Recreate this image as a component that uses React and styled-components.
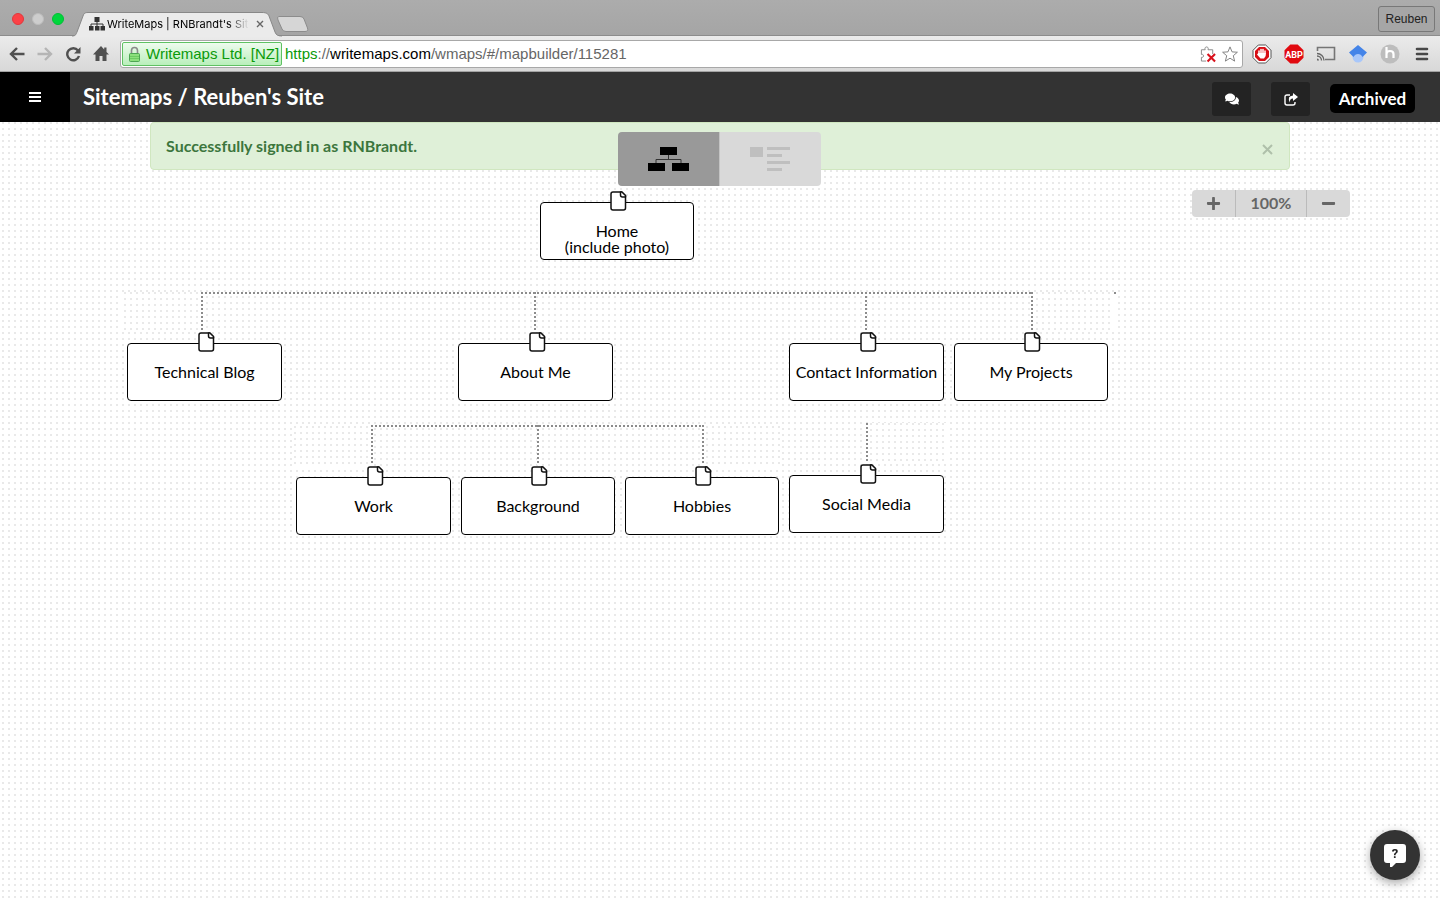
import React from 'react';
import styled, { createGlobalStyle } from 'styled-components';
import { FaPlus, FaMinus, FaComments } from 'react-icons/fa';

const Global = createGlobalStyle`
  * { box-sizing: border-box; }
  body { margin: 0; font-family: Lato, "Liberation Sans", sans-serif; color: #000; background: #fff; }
  button, input { font: inherit; color: inherit; margin: 0; padding: 0; border: 0; background: none; }
`;

const Page = styled.div`
  min-height: 100vh;
  display: flex;
  flex-direction: column;
`;

/* Browser window */
const TabStrip = styled.div`
  height: 36px;
  display: flex;
  align-items: flex-end;
  background: linear-gradient(#acacac, #a5a5a5);
  border-bottom: 1px solid #8c8c8c;
`;
const Lights = styled.div`
  display: flex;
  gap: 8px;
  padding: 0 8px 10px 12px;
`;
const Light = styled.span`
  width: 12px;
  height: 12px;
  border-radius: 50%;
  background: ${p => p.$color};
  border: 1px solid ${p => p.$edge};
`;
const Tab = styled.div`
  position: relative;
  width: 210px;
  height: 24px;
  margin: 0 -6px -1px 0;
  display: flex;
  align-items: center;
  padding: 0 18px 0 17px;
  font: 11px/16px Inter, sans-serif;
`;
const TabShape = styled.svg`
  position: absolute;
  inset: 0;
`;
const TabIcon = styled.svg`
  position: relative;
  flex: none;
  margin-right: 2px;
`;
const TabTitle = styled.span`
  position: relative;
  flex: 1;
  overflow: hidden;
  white-space: nowrap;
  -webkit-mask-image: linear-gradient(90deg, #000 85%, transparent);
  mask-image: linear-gradient(90deg, #000 85%, transparent);
`;
const TabClose = styled.button`
  position: relative;
  width: 8px;
  height: 16px;
  margin-left: 7px;
  display: flex;
  align-items: center;
`;
const NewTab = styled.button`
  width: 34px;
  height: 20px;
  display: flex;
  margin-bottom: 2px;
`;
const Profile = styled.button`
  && {
    height: 26px;
    width: 57px;
    margin: 0 5px 3px auto;
    border: 1px solid #787878;
    border-radius: 3px;
    font: 12px/16px "Liberation Sans", sans-serif;
    color: #222;
    background: #a6a6a6;
  }
`;
const Toolbar = styled.div`
  height: 36px;
  display: flex;
  align-items: center;
  gap: 9px;
  padding: 0 8px 0 9px;
  background: linear-gradient(#ebebeb, #d8d8d8);
  border-bottom: 1px solid #a3a3a3;
`;
const ToolButton = styled.button`
  width: 16px;
  height: 20px;
  flex: none;
  display: flex;
  align-items: center;
  justify-content: center;
`;
const Address = styled.div`
  flex: 1;
  height: 28px;
  display: flex;
  align-items: center;
  border: 1px solid #a8a8a8;
  border-radius: 3px;
  background: #fff;
  padding: 0 4px 0 1px;
  font: 15px/20px "Liberation Sans", sans-serif;
`;
const Nav = styled.div`
  display: flex;
  gap: 12px;
  padding-right: 2px;
`;
const Cert = styled.span`
  height: 24px;
  width: 160px;
  flex: none;
  display: flex;
  align-items: center;
  gap: 5px;
  padding: 0 1px 0 5px;
  border: 1px solid #5fc163;
  border-radius: 2px;
  background: linear-gradient(#eefbee, #b9efbb);
  color: #0a9a0a;
  white-space: nowrap;
`;
const Url = styled.span`
  flex: 1;
  padding-left: 3px;
  color: #666;
  white-space: nowrap;
`;
const Scheme = styled.span` color: #0a9a0a; `;
const Host = styled.span` color: #000; `;
const AddressIcons = styled.div`
  display: flex;
  gap: 6px;
`;
const Extensions = styled.div`
  display: flex;
  gap: 12px;
  & > button { width: 20px; }
`;

/* Application header */
const Header = styled.header`
  height: 50px;
  display: flex;
  align-items: center;
  background: #333;
`;
const MenuButton = styled.button`
  && {
    width: 70px;
    height: 50px;
    background: #000;
    display: flex;
    align-items: center;
    justify-content: center;
  }
`;
const Title = styled.h1`
  margin: 0;
  padding: 0 0 0 13px;
  flex: 1;
  font-size: 22px;
  line-height: 32px;
  font-weight: 700;
  color: #fff;
`;
const Actions = styled.div`
  display: flex;
  align-items: center;
  gap: 20px;
  padding: 4px 25px 0 0;
`;
const ActionButton = styled.button`
  && {
    width: 39px;
    height: 34px;
    border-radius: 3px;
    background: #232323;
    color: #fff;
    display: flex;
    align-items: center;
    justify-content: center;
  }
`;
const Archived = styled.span`
  height: 29px;
  width: 85px;
  margin-bottom: 2px;
  border-radius: 5px;
  background: #000;
  color: #fff;
  font-size: 17px;
  line-height: 29px;
  font-weight: 700;
  text-align: center;
`;

/* Workspace */
const Workspace = styled.main`
  position: relative;
  flex: 1;
  background: url("data:image/svg+xml,%3Csvg xmlns='http://www.w3.org/2000/svg' width='6' height='6'%3E%3Crect x='2' width='2' height='2' fill='%23e9e9e9'/%3E%3C/svg%3E") #fff;
`;
const Alert = styled.div`
  margin: 0 150px;
  height: 48px;
  display: flex;
  justify-content: space-between;
  align-items: center;
  padding: 0 16px 0 15px;
  border: 1px solid #d0e7c0;
  border-radius: 4px;
  background: #dff0d8;
  color: #3c763d;
  font-size: 16px;
  line-height: 20px;
  font-weight: 700;
`;
const AlertClose = styled.button`
  height: 12px;
  margin-top: 8px;
  display: flex;
`;
const ViewToggle = styled.div`
  position: absolute;
  top: 10px;
  left: 50%;
  margin-left: -102px;
  display: flex;
  border-radius: 4px;
  overflow: hidden;
`;
const ViewButton = styled.button`
  && {
    width: ${p => (p.$active ? 101 : 102)}px;
    height: 54px;
    background: ${p => (p.$active ? '#999' : '#d9d9d9')};
    border-left: ${p => (p.$active ? 0 : 1)}px solid #c4c4c4;
    display: flex;
    align-items: center;
    justify-content: center;
  }
`;
const Zoom = styled.div`
  position: absolute;
  top: 68px;
  right: 90px;
  display: flex;
  border-radius: 4px;
  overflow: hidden;
  background: #d9d9d9;
  color: #666;
`;
const ZoomButton = styled.button`
  width: 43px;
  height: 27px;
  display: flex;
  align-items: center;
  justify-content: center;
`;
const ZoomValue = styled.span`
  width: 72px;
  border: solid #bbb;
  border-width: 0 1px;
  font-size: 16px;
  line-height: 26px;
  font-weight: 700;
  text-align: center;
`;

/* Free diagram canvas: coordinates are the content */
const Map = styled.div`
  position: absolute;
  top: 0;
  left: 50%;
  margin-left: -720px;
  width: 0;
  height: 0;
`;
const Node = styled.div`
  position: absolute;
  left: ${p => p.$x}px;
  top: ${p => p.$y}px;
  width: ${p => p.$w || 155}px;
  height: 58px;
  padding: 3px 0 4px;
  border: 1px solid #000;
  border-radius: 4px;
  background: #fff;
  display: flex;
  align-items: ${p => (p.$root ? 'flex-end' : 'center')};
  justify-content: center;
  text-align: center;
  white-space: pre;
  font-size: 16px;
  line-height: 16px;
  font-variant-ligatures: none;
`;
const PageIcon = styled.svg`
  position: absolute;
  top: -12px;
  right: 66px;
`;
const Patch = styled.div`
  position: absolute;
  left: ${p => p.$x}px;
  top: ${p => p.$y}px;
  width: ${p => p.$w}px;
  height: 40px;
  background: url("data:image/svg+xml,%3Csvg xmlns='http://www.w3.org/2000/svg' width='6' height='6'%3E%3Crect x='2' width='2' height='2' fill='%23e9e9e9'/%3E%3C/svg%3E") #fff;
`;
const Line = styled.div`
  position: absolute;
  left: ${p => p.$x}px;
  top: ${p => p.$y}px;
  width: ${p => p.$w || 2}px;
  height: ${p => p.$h || 2}px;
  background: repeating-linear-gradient(${p => (p.$w ? '90deg' : '180deg')}, #8c8c8c 0 2px, #fff 2px 4px);
`;
const Help = styled.button`
  && {
    position: fixed;
    right: 20px;
    bottom: 20px;
    width: 50px;
    height: 50px;
    border-radius: 50%;
    background: #333;
    box-shadow: 0 3px 10px rgba(0, 0, 0, 0.35);
    display: flex;
    align-items: center;
    justify-content: center;
  }
`;

const nodes = [
  { x: 540, y: 80, w: 154, label: 'Home\n(include photo)', root: true },
  { x: 127, y: 221, label: 'Technical Blog' },
  { x: 458, y: 221, label: 'About Me' },
  { x: 789, y: 221, label: 'Contact Information' },
  { x: 954, y: 221, w: 154, label: 'My Projects' },
  { x: 296, y: 355, label: 'Work' },
  { x: 461, y: 355, w: 154, label: 'Background' },
  { x: 625, y: 355, w: 154, label: 'Hobbies' },
  { x: 789, y: 353, label: 'Social Media' },
];
const patches = [
  { x: 122, y: 170, w: 79 },
  { x: 1034, y: 170, w: 80 },
  { x: 292, y: 304, w: 79 },
  { x: 704, y: 304, w: 78 },
  { x: 868, y: 301, w: 78 },
];
const lines = [
  { x: 201, y: 170, w: 832 },
  { x: 1114, y: 170, w: 2 },
  { x: 201, y: 170, h: 40 },
  { x: 534, y: 170, h: 40 },
  { x: 865, y: 170, h: 40 },
  { x: 1031, y: 170, h: 40 },
  { x: 371, y: 303, w: 332 },
  { x: 371, y: 303, h: 40 },
  { x: 537, y: 303, h: 40 },
  { x: 702, y: 303, h: 40 },
  { x: 866, y: 301, h: 40 },
];

const Svg = ({ w, h, children, ...rest }) => (
  <svg width={w} height={h} viewBox={`0 0 ${w} ${h}`} fill="none" aria-hidden="true" {...rest}>{children}</svg>
);

function Browser() {
  return (
    <>
      <TabStrip>
        <Lights>
          <Light $color="#fc4146" $edge="#e0383c" />
          <Light $color="#cdcdcd" $edge="#bdbdbd" />
          <Light $color="#00d63c" $edge="#00bf35" />
        </Lights>
        <Tab>
          <TabShape width="210" height="25" viewBox="0 0 210 25">
            <path d="M0 24.500C4 24 4 22 5 20L11 4C12 1 13 .5 16 .5H190C195 .5 196 2 197 4L203 20C204 23 206 24 210 24.500V25H0Z" fill="#ebebeb" />
            <path d="M0 24C4 24 4 22 5 20L11 4C12 1 13 .5 16 .5H190C195 .5 196 2 197 4L203 20C204 23 206 24 210 24" fill="none" stroke="#888" />
          </TabShape>
          <TabIcon width="16" height="14" viewBox="0 0 16 14" aria-hidden="true">
            <path d="M5.500 0h5v5h-5zM0 9h4.500v4.500H0zM6 9h4.500v4.500H6zM11.500 9H16v4.500h-4.500z" fill="#333" />
            <path d="M8 5v4M2 9V7h12v2" fill="none" stroke="#333" />
          </TabIcon>
          <TabTitle>WriteMaps | RNBrandt's Site</TabTitle>
          <TabClose aria-label="Close tab"><Svg w={8} h={8}><path d="M1 1l6 6M7 1L1 7" stroke="#666" strokeWidth="1.400" /></Svg></TabClose>
        </Tab>
        <NewTab aria-label="New tab"><Svg w={34} h={20}><path d="M3 3.500H24Q27 3.500 28 6L31.500 15Q32.500 18.500 29 18.500H10Q7 18.500 6 16L2 7Q.5 3.500 3 3.500Z" fill="#d6d6d6" stroke="#8c8c8c" /></Svg></NewTab>
        <Profile>Reuben</Profile>
      </TabStrip>
      <Toolbar>
        <Nav>
          <ToolButton aria-label="Back"><Svg w={16} h={16}><path d="M15.500 8H2.500M8 2L2 8l6 6" stroke="#505050" strokeWidth="2.400" /></Svg></ToolButton>
          <ToolButton aria-label="Forward"><Svg w={16} h={16}><path d="M.5 8h13M8 2l6 6-6 6" stroke="#b5b5b5" strokeWidth="2.400" /></Svg></ToolButton>
          <ToolButton aria-label="Reload"><Svg w={16} h={16}><path d="M13 4.500A6 6 0 1 0 14 10" stroke="#505050" strokeWidth="2.400" /><path d="M15.500 1v6.500H9z" fill="#505050" /></Svg></ToolButton>
          <ToolButton aria-label="Home"><Svg w={16} h={16}><path d="M8 0L0 8.500h2.500V15H6.500V10h3v5h4V8.500H16L13.500 6V1.500h-2.300v2z" fill="#505050" /></Svg></ToolButton>
        </Nav>
        <Address>
          <Cert>
            <Svg w={13} h={16}>
              <path d="M3.500 8V4.500a3 3 0 0 1 6 0V8" stroke="#8a8a8a" strokeWidth="1.600" />
              <rect x="1.500" y="7.500" width="10" height="8" rx="1" fill="#8be07c" stroke="#4da653" />
              <path d="M2 10.500h9M2 12.500h9" stroke="#6ccb62" />
            </Svg>
            Writemaps Ltd. [NZ]
          </Cert>
          <Url><Scheme>https</Scheme>://<Host>writemaps.com</Host>/wmaps/#/mapbuilder/115281</Url>
          <AddressIcons>
            <ToolButton aria-label="Plug-in blocked"><Svg w={17} h={18}><path d="M6.500 16.500h-5v-4c3 1 3-4 0-3v-5h4c-1.500-4 4.500-4 3 0h5V9" stroke="#888" /><path d="M8 9l8 8M16 9l-8 8" stroke="#d8101b" strokeWidth="2.200" /></Svg></ToolButton>
            <ToolButton aria-label="Bookmark"><Svg w={18} h={18}><path d="M9 1l2.300 5.600 6 .4-4.600 3.900L14.200 17 9 13.700 3.800 17l1.500-6.100L.7 7l6-.4z" stroke="#777" /></Svg></ToolButton>
          </AddressIcons>
        </Address>
        <Extensions>
          <ToolButton aria-label="Ad blocker"><Svg w={20} h={20}>
            <path d="M6.300 1h7.400L19 6.300v7.400L13.700 19H6.300L1 13.700V6.300z" fill="#fff" stroke="#555" />
            <path d="M7 3h6l4 4v6l-4 4H7l-4-4V7z" fill="#d80f16" />
            <path d="M7 10V7M9 10V5.500M11 10V5.500M13 10V7" stroke="#fff" strokeWidth="1.500" strokeLinecap="round" /><path d="M6.300 9h7.400v3L12 14.500H8.500L5 10.500z" fill="#fff" />
          </Svg></ToolButton>
          <ToolButton aria-label="ABP"><Svg w={20} h={20}>
            <path d="M6.300.5h7.400l5.800 5.800v7.400l-5.800 5.800H6.300L.5 13.700V6.300z" fill="#e10a10" />
            <text x="10" y="13.500" textAnchor="middle" fontFamily="Roboto, sans-serif" fontSize="9" fontWeight="700" fill="#fff">ABP</text>
          </Svg></ToolButton>
          <ToolButton aria-label="Cast"><Svg w={20} h={16}><path d="M1.500 5V1.500h17v12H9" stroke="#757575" strokeWidth="1.600" /><path d="M1 7.500a7 7 0 0 1 7 7M1 10a4.500 4.500 0 0 1 4.500 4.500" stroke="#666" strokeWidth="1.300" /><path d="M1 12.500a2 2 0 0 1 2 2H1z" fill="#666" /></Svg></ToolButton>
          <ToolButton aria-label="Scholar"><Svg w={20} h={18}><circle cx="10" cy="12" r="5.500" fill="#a8c7fa" /><path d="M10 0L1 7.500l4.500 4.500q1.500-3 4.500-3t4.500 3L19 7.500z" fill="#4484e8" /></Svg></ToolButton>
          <ToolButton aria-label="Honey"><Svg w={20} h={20}><circle cx="10" cy="10" r="9.500" fill="#bdbdbd" /><path d="M6.500 3v11M6.500 10q0-3 3.500-3t3.500 3v4" stroke="#fff" strokeWidth="2.200" /></Svg></ToolButton>
          <ToolButton aria-label="Chrome menu"><Svg w={14} h={14}><path d="M2 2h10M2 7h10M2 12h10" stroke="#484848" strokeWidth="2.600" strokeLinecap="round" /></Svg></ToolButton>
        </Extensions>
      </Toolbar>
    </>
  );
}

export default function App() {
  return (
    <Page>
      <Global />
      <Browser />
      <Header>
        <MenuButton aria-label="Menu"><Svg w={12} h={10}><path d="M0 1h12M0 5h12M0 9h12" stroke="#fff" strokeWidth="2" /></Svg></MenuButton>
        <Title>Sitemaps / Reuben's Site</Title>
        <Actions>
          <ActionButton aria-label="Comments"><FaComments size={14} /></ActionButton>
          <ActionButton aria-label="Share"><Svg w={14} h={13}><path d="M6 2H3Q1 2 1 4v6q0 2 2 2h6q2 0 2-2V9" stroke="#fff" strokeWidth="1.400" /><path d="M9 0l5 4-5 4V5.500Q5.500 5.500 6 9.500 2.500 3 9 2.500z" fill="#fff" /></Svg></ActionButton>
          <Archived>Archived</Archived>
        </Actions>
      </Header>
      <Workspace>
        <Alert role="status">
          <span>Successfully signed in as RNBrandt.</span>
          <AlertClose aria-label="Dismiss"><Svg w={11} h={11}><path d="M1 1l9 9M10 1l-9 9" stroke="#afc0aa" strokeWidth="2" /></Svg></AlertClose>
        </Alert>
        <Map>
          {patches.map(p => <Patch key={`${p.x}-${p.y}`} $x={p.x} $y={p.y} $w={p.w} />)}
          {lines.map((l, i) => <Line key={i} $x={l.x} $y={l.y} $w={l.w} $h={l.h} />)}
          {nodes.map(n => (
            <Node key={n.label} $x={n.x} $y={n.y} $w={n.w} $root={n.root}>
              <PageIcon width="17" height="20" viewBox="0 0 17 20" aria-hidden="true">
                <path d="M3 1H11.500L15.500 5V17Q15.500 19 13.500 19H3Q1 19 1 17V3Q1 1 3 1Z" fill="#fff" stroke="#111" strokeWidth="1.500" />
                <path d="M10.500 1H12L15.500 4.500V6H12.500Q10.500 6 10.500 4Z" fill="#fff" stroke="#111" strokeWidth="1.500" strokeLinejoin="round" />
              </PageIcon>
              {n.label}
            </Node>
          ))}
        </Map>
        <ViewToggle>
          <ViewButton $active aria-label="Map view"><Svg w={42} h={24}><path d="M12 0h17v8H12zM0 16h17v8H0zM24 16h17v8H24z" fill="#000" /><path d="M20.500 8v4.500M8 16v-3.500h25V16" stroke="#333" /></Svg></ViewButton>
          <ViewButton aria-label="List view"><Svg w={42} h={24}><path d="M0 0h13v10H0zM17 0h23v3H17zM17 7h15v3H17zM17 14h23v3H17zM17 21h15v3H17z" fill="#bfbfbf" /></Svg></ViewButton>
        </ViewToggle>
        <Zoom>
          <ZoomButton aria-label="Zoom in"><FaPlus size={15} /></ZoomButton>
          <ZoomValue>100%</ZoomValue>
          <ZoomButton aria-label="Zoom out"><FaMinus size={15} /></ZoomButton>
        </Zoom>
      </Workspace>
      <Help aria-label="Help"><Svg w={22} h={24}>
        <path d="M3 1h16q3 0 3 3v13q0 3-3 3H12l-4 4H6v-4H3q-3 0-3-3V4q0-3 3-3z" fill="#fff" />
        <text x="11" y="15" textAnchor="middle" fontFamily="Roboto, sans-serif" fontSize="13" fontWeight="700" fill="#222">?</text>
      </Svg></Help>
    </Page>
  );
}
